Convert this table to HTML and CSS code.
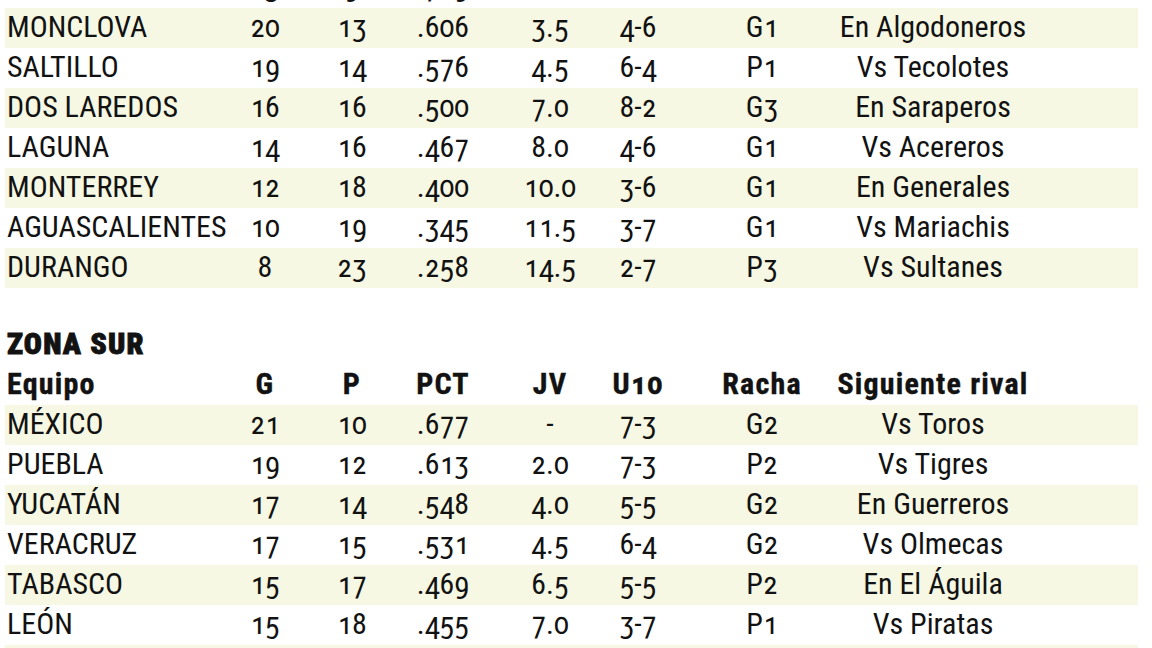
FILE: index.html
```
<!DOCTYPE html>
<html lang="es">
<head>
<meta charset="utf-8">
<title>Standings</title>
<link rel="stylesheet" href="styles.css">
</head>
<body>
<div class="page">
  <section class="zone zone-norte">
    <div class="row"><span class="team">TIJUANA</span><span>23</span><span>9</span><span>.719</span><span>-</span><span>8-2</span><span>G1</span><span>Vs Rieleros</span></div>
    <div class="row alt"><span class="team">MONCLOVA</span><span>20</span><span>13</span><span>.606</span><span>3.5</span><span>4-6</span><span>G1</span><span>En Algodoneros</span></div>
    <div class="row"><span class="team">SALTILLO</span><span>19</span><span>14</span><span>.576</span><span>4.5</span><span>6-4</span><span>P1</span><span>Vs Tecolotes</span></div>
    <div class="row alt"><span class="team">DOS LAREDOS</span><span>16</span><span>16</span><span>.500</span><span>7.0</span><span>8-2</span><span>G3</span><span>En Saraperos</span></div>
    <div class="row"><span class="team">LAGUNA</span><span>14</span><span>16</span><span>.467</span><span>8.0</span><span>4-6</span><span>G1</span><span>Vs Acereros</span></div>
    <div class="row alt"><span class="team">MONTERREY</span><span>12</span><span>18</span><span>.400</span><span>10.0</span><span>3-6</span><span>G1</span><span>En Generales</span></div>
    <div class="row"><span class="team">AGUASCALIENTES</span><span>10</span><span>19</span><span>.345</span><span>11.5</span><span>3-7</span><span>G1</span><span>Vs Mariachis</span></div>
    <div class="row alt"><span class="team">DURANGO</span><span>8</span><span>23</span><span>.258</span><span>14.5</span><span>2-7</span><span>P3</span><span>Vs Sultanes</span></div>
  </section>

  <section class="zone zone-sur">
    <h2 class="zone-title">ZONA SUR</h2>
    <div class="row head"><span class="team">Equipo</span><span>G</span><span>P</span><span>PCT</span><span>JV</span><span>U10</span><span>Racha</span><span>Siguiente rival</span></div>
    <div class="row alt"><span class="team">MÉXICO</span><span>21</span><span>10</span><span>.677</span><span>-</span><span>7-3</span><span>G2</span><span>Vs Toros</span></div>
    <div class="row"><span class="team">PUEBLA</span><span>19</span><span>12</span><span>.613</span><span>2.0</span><span>7-3</span><span>P2</span><span>Vs Tigres</span></div>
    <div class="row alt"><span class="team">YUCATÁN</span><span>17</span><span>14</span><span>.548</span><span>4.0</span><span>5-5</span><span>G2</span><span>En Guerreros</span></div>
    <div class="row"><span class="team">VERACRUZ</span><span>17</span><span>15</span><span>.531</span><span>4.5</span><span>6-4</span><span>G2</span><span>Vs Olmecas</span></div>
    <div class="row alt"><span class="team">TABASCO</span><span>15</span><span>17</span><span>.469</span><span>6.5</span><span>5-5</span><span>P2</span><span>En El Águila</span></div>
    <div class="row"><span class="team">LEÓN</span><span>15</span><span>18</span><span>.455</span><span>7.0</span><span>3-7</span><span>P1</span><span>Vs Piratas</span></div>
    <div class="row alt"><span class="team">OAXACA</span><span>13</span><span>18</span><span>.419</span><span>8.0</span><span>4-6</span><span>P1</span><span>Vs Leones</span></div>
  </section>
</div>
</body>
</html>
```
FILE: styles.css
```
html, body {
  margin: 0;
  padding: 0;
  background: #ffffff;
}

body {
  font-family: Roboto, "Open Sans", sans-serif;
  font-stretch: condensed;
  font-size: 30px;
  color: #121212;
  font-variant-numeric: oldstyle-nums;
  overflow: hidden;
  height: 648px;
}

.page {
  padding-left: 5px;
  width: 1133px;
}

.zone-norte {
  margin-top: -32px;
}

.zone-sur {
  margin-top: 37px;
}

.zone-title {
  margin: 0;
  height: 40px;
  line-height: 37px;
  padding-left: 2px;
  box-sizing: border-box;
  font-size: 30px;
  font-weight: 900;
  letter-spacing: 1.2px;
  -webkit-text-stroke: 0.9px currentColor;
}

.row {
  display: grid;
  grid-template-columns: 216px 88px 86px 96px 118px 58px 190px 152px 1fr;
  height: 40px;
  line-height: 37px;
  padding-bottom: 3px;
  box-sizing: border-box;
  white-space: nowrap;
}

.row > span {
  display: flex;
  justify-content: center;
  min-width: 0;
}

.row > .team {
  justify-content: flex-start;
  padding-left: 2px;
}

.row.alt {
  background: #f6f8e4;
}

.row.head {
  font-weight: 700;
  letter-spacing: 1.2px;
  -webkit-text-stroke: 0.4px currentColor;
}
```
